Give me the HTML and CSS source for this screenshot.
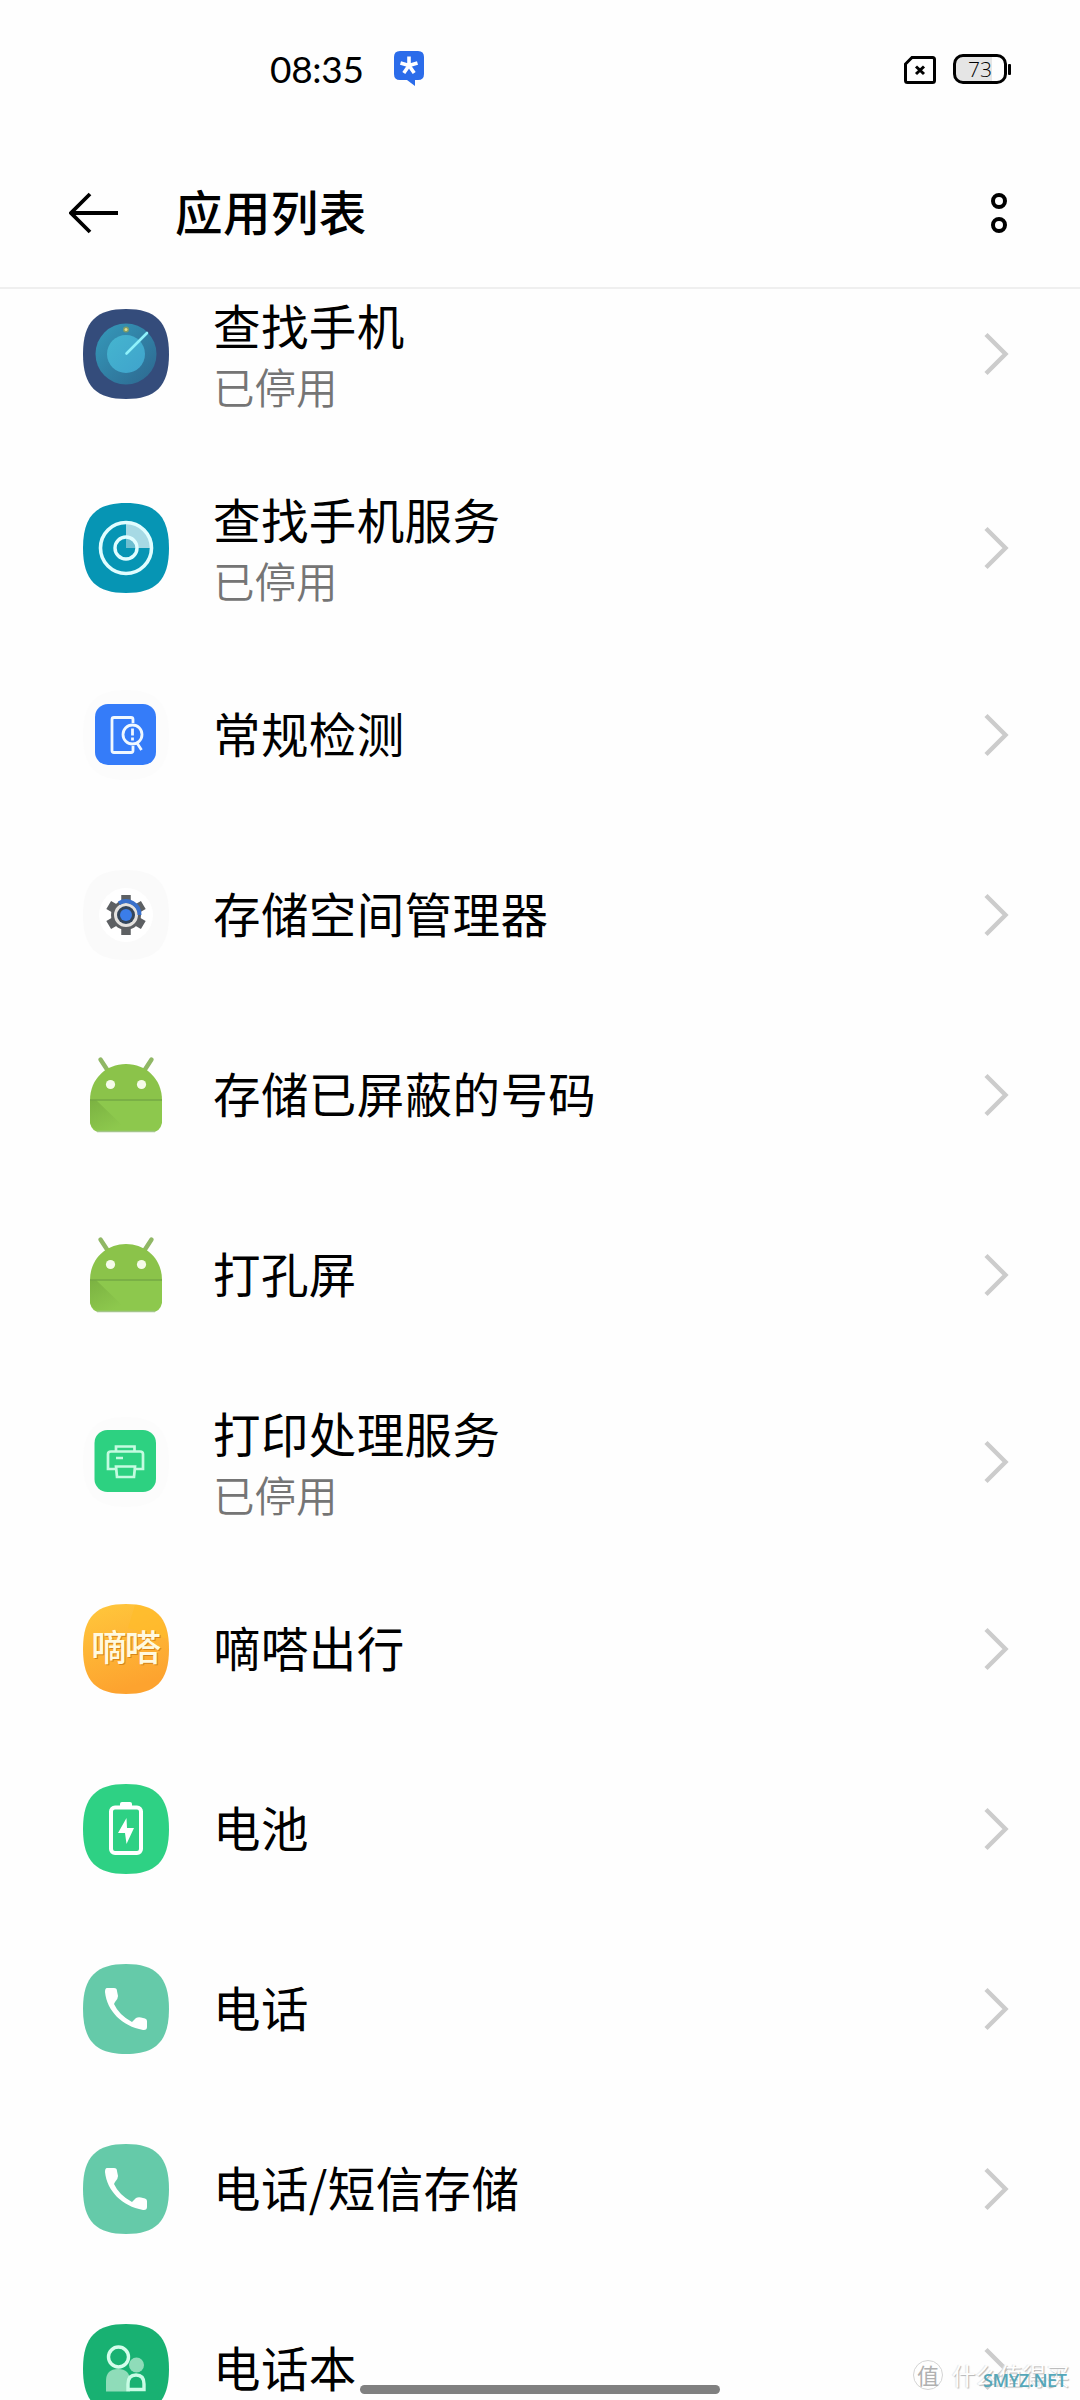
FILE: index.html
```html
<!DOCTYPE html>
<html lang="zh-CN">
<head>
<meta charset="utf-8">
<title>应用列表</title>
<link rel="stylesheet" href="styles.css">
</head>
<body>
<svg class="defs" width="0" height="0" aria-hidden="true">
  <defs>
    <path id="squircle" d="M43 0C72 0 86 12 86 45S72 90 43 90 0 78 0 45 14 0 43 0Z"/>
    <linearGradient id="radar" x1="0" y1="0" x2="1" y2="1"><stop offset="0" stop-color="#359abb"/><stop offset="1" stop-color="#2d678f"/></linearGradient>
    <linearGradient id="radar-core" x1="0" y1="0" x2="1" y2="1"><stop offset="0" stop-color="#45b5cf"/><stop offset="1" stop-color="#3fa3cc"/></linearGradient>
    <linearGradient id="orange" x1="0" y1="0" x2="0.3" y2="1"><stop offset="0" stop-color="#ffc83c"/><stop offset="1" stop-color="#fda32f"/></linearGradient>
    <linearGradient id="fold" x1="0" y1="0" x2="0.6" y2="1"><stop offset="0" stop-color="#6fa33a"/><stop offset="1" stop-color="#8dc84d"/></linearGradient>
    <symbol id="chevron" viewBox="0 0 26 44"><path d="M2 2.500 21.500 22 2 41.500" fill="none" stroke="#ccc" stroke-width="4.400"/></symbol>
    <symbol id="android" viewBox="0 0 86 90">
      <path d="M17.500 9.500 25 21M68.500 9.500 61 21" stroke="#90b765" stroke-width="4.400" stroke-linecap="round"/>
      <path d="M7 50C7 29 23 14 43 14s36 15 36 36Z" fill="#8bc34a"/>
      <path d="M7 50H79V73Q77 82 69 82H17Q9 82 7 73Z" fill="#8dc84d"/>
      <path d="M7 50H13L44 80H17Q9 80 7 73Z" fill="url(#fold)" opacity=".6"/>
      <path d="M7 50H79" stroke="#75a944" stroke-width="1.400"/>
      <path d="M14 81.500H72" stroke="#a3c58a" stroke-width="1.600"/>
      <circle cx="27.500" cy="34.500" r="4.600" fill="#f5fbe9"/><circle cx="58.500" cy="34.500" r="4.600" fill="#f5fbe9"/>
    </symbol>
    <symbol id="phone" viewBox="0 0 86 90">
      <use href="#squircle" fill="#65caa9"/>
      <path d="M24 24H31Q34 24 34 27L35 32Q35 35 32 38L31 40Q36 51 49 58L53 54Q55 53 58 53.500L62 54.500Q64 55 64 57V63Q64 66.500 60 66C39 62 24 47 22 28Q22 24 24 24Z" fill="#fff"/>
    </symbol>
  </defs>
</svg>

<div class="screen">
  <div class="statusbar">
    <span class="time">08:35</span>
    <svg class="notice" width="30" height="36" viewBox="0 0 30 36"><path d="M6 0H24Q30 0 30 6V23Q30 29 24 29H21V35L13 29H6Q0 29 0 23V6Q0 0 6 0Z" fill="#2b6cea"/><path d="M15 14.500V5.500M15 14.500 6.500 12M15 14.500 23.500 12M15 14.500 9.800 22M15 14.500 20.200 22" stroke="#fff" stroke-width="3.600"/></svg>
    <svg class="sim" width="32" height="28" viewBox="0 0 32 28"><path d="M8 1.500H28.500Q30.500 1.500 30.500 3.500V24.500Q30.500 26.500 28.500 26.500H3.500Q1.500 26.500 1.500 24.500V8Z" fill="none" stroke="#000" stroke-width="3"/><path d="M12 10.500 20 18M20 10.500 12 18" stroke="#000" stroke-width="3"/></svg>
    <div class="battery"><span class="level">73</span></div>
    <i class="battery-tip"></i>
  </div>

  <header class="titlebar">
    <svg class="back" width="50" height="42" viewBox="0 0 50 42"><path d="M21 2 2 21 21 40M2 21H49" fill="none" stroke="#000" stroke-width="3.800"/></svg>
    <h1>应用列表</h1>
    <div class="more"><i></i><i></i></div>
  </header>

  <main class="list">
    <div class="row double">
      <svg class="icon" viewBox="0 0 86 90"><use href="#squircle" fill="#344c7b"/><circle cx="43" cy="45" r="30.500" fill="url(#radar)"/><circle cx="43" cy="45" r="19" fill="url(#radar-core)"/><path d="M43.500 44.500 64 24" stroke="#8ff2fb" stroke-width="2.600" stroke-linecap="round"/><circle cx="43" cy="20.500" r="3" fill="#7f9d68"/><circle cx="43" cy="20.500" r="1.500" fill="#e5d98a"/></svg>
      <div class="text"><span class="name">查找手机</span><span class="state">已停用</span></div>
      <svg class="go"><use href="#chevron"/></svg>
    </div>
    <div class="row double">
      <svg class="icon" viewBox="0 0 86 90"><use href="#squircle" fill="#0695b4"/><path d="M43 45V19A26 26 0 0 1 69 45Z" fill="#a6d9e4"/><circle cx="43" cy="45" r="11" fill="#0695b4"/><path d="M43 45V34A11 11 0 0 1 54 45Z" fill="#6dbed0"/><circle cx="43" cy="45" r="25.500" fill="none" stroke="#e0fdff" stroke-width="3.600"/><circle cx="43" cy="45" r="11" fill="none" stroke="#e0fdff" stroke-width="3.400"/></svg>
      <div class="text"><span class="name">查找手机服务</span><span class="state">已停用</span></div>
      <svg class="go"><use href="#chevron"/></svg>
    </div>
    <div class="row">
      <svg class="icon" viewBox="0 0 86 90"><use href="#squircle" fill="#fcfcfc"/><rect x="12" y="14" width="61" height="61" rx="13" fill="#357cf9"/><g fill="none" stroke="#f0f8ff" stroke-width="2.800"><path d="M50 33V29.500Q50 27.500 48 27.500H31Q29 27.500 29 29.500V60.500Q29 62.500 31 62.500H48Q50 62.500 50 60.500V56"/><circle cx="49.500" cy="44.500" r="9.500"/><path d="M54 53 58.500 60M49.500 38.500V45.500M49.500 47.500V50.500"/></g></svg>
      <div class="text"><span class="name">常规检测</span></div>
      <svg class="go"><use href="#chevron"/></svg>
    </div>
    <div class="row">
      <svg class="icon" viewBox="0 0 86 90"><use href="#squircle" fill="#fafafa"/><circle cx="43" cy="45" r="27" fill="#fff"/><g stroke="#5d6063" stroke-width="9.500"><path d="M43 25V65M25.700 35 60.300 55M25.700 55 60.300 35"/></g><circle cx="43" cy="45" r="13.500" fill="#e4e2df" stroke="#5d6063" stroke-width="3"/><path d="M36 33.200A13.500 13.500 0 0 1 56.500 45" fill="none" stroke="#3970cb" stroke-width="4"/><circle cx="43" cy="45" r="9" fill="#34465b"/><circle cx="43" cy="45" r="6" fill="#3b7de9"/></svg>
      <div class="text"><span class="name">存储空间管理器</span></div>
      <svg class="go"><use href="#chevron"/></svg>
    </div>
    <div class="row">
      <svg class="icon"><use href="#android"/></svg>
      <div class="text"><span class="name">存储已屏蔽的号码</span></div>
      <svg class="go"><use href="#chevron"/></svg>
    </div>
    <div class="row">
      <svg class="icon"><use href="#android"/></svg>
      <div class="text"><span class="name">打孔屏</span></div>
      <svg class="go"><use href="#chevron"/></svg>
    </div>
    <div class="row double">
      <svg class="icon" viewBox="0 0 86 90"><use href="#squircle" fill="#fcfcfc"/><rect x="11.500" y="13" width="61.500" height="62" rx="13" fill="#2dd181"/><g fill="none" stroke="#c4fbe0" stroke-width="2.700"><path d="M33 34V29.500H51.500V34M33 52H25V37Q25 34.500 28 34.500H57Q60 34.500 60 37V52H52"/><path d="M33 49.500H52L51 60H34ZM33 41H40"/></g></svg>
      <div class="text"><span class="name">打印处理服务</span><span class="state">已停用</span></div>
      <svg class="go"><use href="#chevron"/></svg>
    </div>
    <div class="row">
      <svg class="icon" viewBox="0 0 86 90"><use href="#squircle" fill="url(#orange)"/><path d="M52 1Q80 3 85 35L45 24Z" fill="#ffbd28" opacity=".6"/><text class="logo-shade" x="9" y="58" textLength="70">嘀嗒</text><text class="logo" x="8" y="57" textLength="70">嘀嗒</text></svg>
      <div class="text"><span class="name">嘀嗒出行</span></div>
      <svg class="go"><use href="#chevron"/></svg>
    </div>
    <div class="row">
      <svg class="icon" viewBox="0 0 86 90"><use href="#squircle" fill="#2ed184"/><path d="M37 22V20Q37 18 39 18H47Q49 18 49 20V22Z" fill="#fff"/><rect x="28" y="23.500" width="30" height="45.500" rx="4" fill="none" stroke="#fff" stroke-width="4"/><path d="M43.500 34 35 49H42L43.500 60 51 44H44Z" fill="#fff"/></svg>
      <div class="text"><span class="name">电池</span></div>
      <svg class="go"><use href="#chevron"/></svg>
    </div>
    <div class="row">
      <svg class="icon"><use href="#phone"/></svg>
      <div class="text"><span class="name">电话</span></div>
      <svg class="go"><use href="#chevron"/></svg>
    </div>
    <div class="row">
      <svg class="icon"><use href="#phone"/></svg>
      <div class="text"><span class="name">电话/短信存储</span></div>
      <svg class="go"><use href="#chevron"/></svg>
    </div>
    <div class="row">
      <svg class="icon" viewBox="0 0 86 90"><use href="#squircle" fill="#18b172"/><path d="M23 67.500V57Q23 45 35 45T47 57V67.500Z" fill="#8fdcb9"/><circle cx="53.500" cy="41" r="7.500" fill="#8fdcb9"/><path d="M45 65.500V60Q45 51 53 51T61 60V65.500Z" fill="#18b172" stroke="#c9fbe5" stroke-width="3.400"/><circle cx="35.500" cy="33" r="10" fill="#18b172" stroke="#d4fdeb" stroke-width="3.400"/></svg>
      <div class="text"><span class="name">电话本</span></div>
      <svg class="go"><use href="#chevron"/></svg>
    </div>
  </main>

  <div class="homebar"></div>
  <div class="watermark"><span class="seal">值</span><span class="brand">什么值得买</span></div>
  <div class="site">SMYZ.NET</div>
</div>
</body>
</html>
```
FILE: styles.css
```css
* { box-sizing: border-box; }
body {
  margin: 0;
  background: #fefefe;
  color: #000;
  font-family: "Noto Sans CJK SC", sans-serif;
}
.defs { display: block; }
.screen {
  position: relative;
  display: flex;
  flex-direction: column;
  width: 1080px;
  height: 2400px;
  overflow: hidden;
}
.statusbar {
  display: flex;
  align-items: center;
  flex: none;
  height: 138px;
  padding: 0 69px 0 270px;
}
.time {
  width: 124px;
  font: 37px/44px Lato, sans-serif;
  letter-spacing: -.3px;
  white-space: nowrap;
}
.notice { margin-bottom: 1px; }
.sim { margin: 1px 17px 0 auto; }
.battery {
  width: 54px;
  height: 30px;
  border: 3px solid #000;
  border-radius: 10px;
  background: linear-gradient(90deg, #e5e5e5 0 36px, #fefefe 36px);
  text-align: center;
}
.level {
  display: block;
  font: 300 21px/24px "Open Sans", sans-serif;
  color: #000;
}
.battery-tip {
  width: 3px;
  height: 11px;
  margin-left: 1px;
  border-radius: 1px;
  background: #000;
}
.titlebar {
  z-index: 1;
  display: flex;
  align-items: flex-start;
  flex: none;
  height: 151px;
  padding: 0 73px 0 69px;
  border-bottom: 2px solid #efefef;
  background: #fefefe;
}
.back { margin-top: 54px; }
.titlebar h1 {
  margin: 38px auto 0 56px;
  font-size: 47.500px;
  font-weight: 500;
  letter-spacing: .4px;
  line-height: 70px;
}
.more {
  display: flex;
  flex-direction: column;
  gap: 8px;
  margin-top: 55px;
}
.more i {
  width: 16px;
  height: 16px;
  border: 4px solid #000;
  border-radius: 50%;
}
.list { flex: none; margin-top: -32px; }
.row {
  display: flex;
  align-items: center;
  height: 180px;
  padding: 0 70px 0 83px;
}
.row.double { height: 194px; }
.icon { flex: none; width: 86px; height: 90px; }
.text {
  display: flex;
  flex-direction: column;
  flex: 1;
  margin-left: 44px;
  padding-bottom: 4px;
}
.double .text { padding: 2px 0 0; }
.name {
  font-size: 47.500px;
  letter-spacing: .4px;
  line-height: 62px;
}
.state {
  font-size: 41.500px;
  line-height: 60px;
  color: #757575;
  font-weight: 350;
}
.go { flex: none; width: 26px; height: 44px; }
.logo, .logo-shade {
  font-size: 36px;
  font-weight: 500;
  fill: #fff9df;
}
.logo-shade { fill: #d88518; }
.homebar {
  position: absolute;
  left: 360px;
  top: 2385px;
  width: 360px;
  height: 9px;
  border-radius: 5px;
  background: #808080;
}
.watermark {
  position: absolute;
  left: 913px;
  top: 2358px;
  display: flex;
  align-items: center;
  gap: 9px;
  color: #fefefe;
  font-size: 23.500px;
  line-height: 34px;
  white-space: nowrap;
}
.seal {
  width: 30px;
  height: 30px;
  border: 1px solid #d4d4d4;
  border-radius: 50%;
  color: #b0b0b0;
  font-size: 22px;
  line-height: 27px;
  text-align: center;
}
.brand { text-shadow: 1px 1px 1px #b5b5b5, -1px 0 1px #e4e4e4; }
.site {
  position: absolute;
  left: 983px;
  top: 2368px;
  color: #55a7b9;
  font: 600 18px/24px "Open Sans", sans-serif;
  letter-spacing: -.4px;
}
```
